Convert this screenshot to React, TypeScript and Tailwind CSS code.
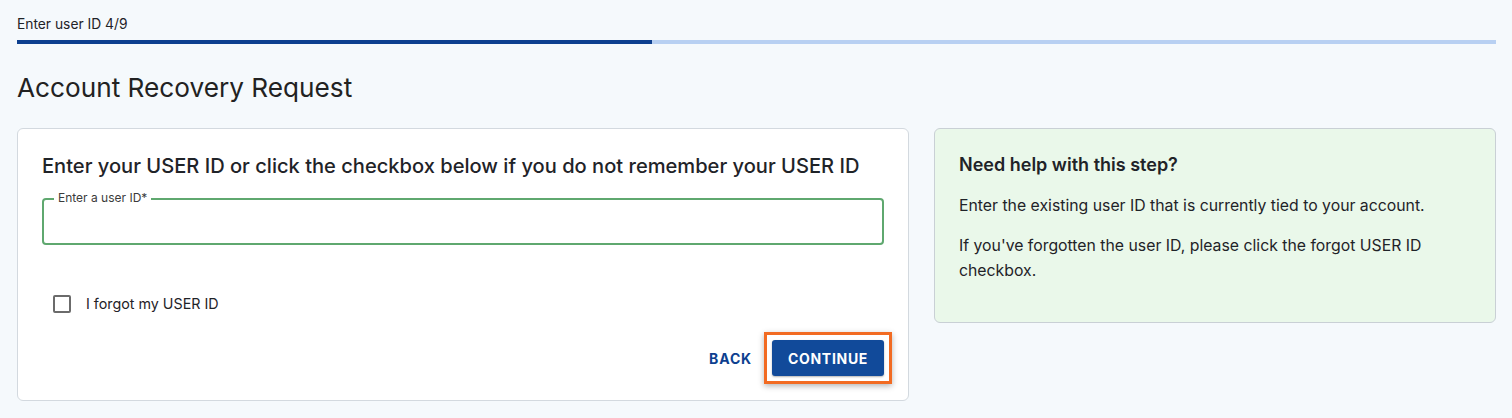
export default function App() {
  return (
    <div className="min-h-[418px] bg-[#f5f9fc] px-[17px] pr-[16px] pt-[15px] font-['Inter',sans-serif] text-[#1f2328]">
      {/* Step progress */}
      <div className="text-[13.8px] leading-[18px] text-[#1f2328]">Enter user ID 4/9</div>
      <div className="mt-[7px] flex h-[4px] w-full bg-[#b8d0f2]">
        <div className="h-full w-[635px] bg-[#0d3f8f]" />
      </div>

      <h1 className="mt-[28px] text-[26.2px] font-normal leading-[32px] text-[#222]">Account Recovery Request</h1>

      <div className="mt-[24px] flex items-start gap-[25px]">
        {/* Form card */}
        <div className="w-[892px] rounded-[6px] border border-[#d3d9df] bg-white px-[24px] pb-[16px] pt-[23px]">
          <h2 className="text-[20.1px] font-medium leading-[28px] text-[#1f2328]">
            Enter your USER ID or click the checkbox below if you do not remember your USER ID
          </h2>

          <div className="relative mt-[18px] h-[47px] rounded-[4px] border-2 border-[#5fa86f]">
            <span className="absolute left-[10px] top-[-9px] bg-white px-[4px] text-[12px] leading-[14px] text-[#3b3b3b]">
              Enter a user ID*
            </span>
            <input className="h-full w-full rounded-[4px] bg-transparent px-[14px] text-[15px] outline-none" />
          </div>

          <label className="ml-[11px] mt-[50px] flex items-center gap-[15px]">
            <span className="h-[18px] w-[18px] rounded-[2px] border-2 border-[#6b6b6b] bg-white" />
            <span className="text-[14.3px] leading-[18px] text-[#1f2328]">I forgot my USER ID</span>
          </label>

          <div className="mt-[19px] flex items-center justify-end gap-[12px]">
            <button className="text-[14px] font-bold tracking-[0.06em] text-[#0d3f8f]">BACK</button>
            <div className="mr-[-8px] border-[3px] border-[#f26b22] p-[5px] shadow-[0_2px_6px_rgba(0,0,0,0.3)]">
              <button className="h-[36px] w-[112px] rounded-[3px] bg-[#114a9a] text-[14px] font-bold tracking-[0.05em] text-white shadow-[0_1px_2px_rgba(0,0,0,0.3)]">
                CONTINUE
              </button>
            </div>
          </div>
        </div>

        {/* Help card */}
        <div className="flex-1 rounded-[6px] border border-[#c9d0d5] bg-[#eaf8ea] px-[24px] pb-[39px] pt-[24px]">
          <h3 className="text-[18px] font-semibold leading-[24px] text-[#1f2328]">Need help with this step?</h3>
          <p className="mt-[16px] text-[15.8px] leading-[25px] text-[#1f2328]">
            Enter the existing user ID that is currently tied to your account.
          </p>
          <p className="mt-[15px] w-[480px] text-[15.8px] leading-[25px] text-[#1f2328]">
            If you've forgotten the user ID, please click the forgot USER ID checkbox.
          </p>
        </div>
      </div>
    </div>
  )
}
